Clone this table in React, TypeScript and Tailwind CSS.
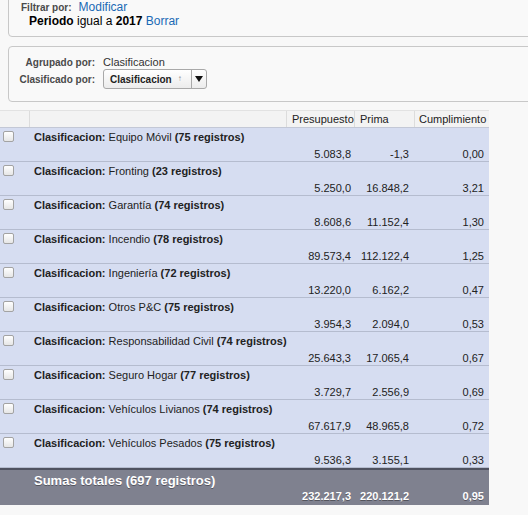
const rows = [
  { name: "Equipo Móvil", count: 75, pres: "5.083,8", prima: "-1,3", cump: "0,00" },
  { name: "Fronting", count: 23, pres: "5.250,0", prima: "16.848,2", cump: "3,21" },
  { name: "Garantía", count: 74, pres: "8.608,6", prima: "11.152,4", cump: "1,30" },
  { name: "Incendio", count: 78, pres: "89.573,4", prima: "112.122,4", cump: "1,25" },
  { name: "Ingeniería", count: 72, pres: "13.220,0", prima: "6.162,2", cump: "0,47" },
  { name: "Otros P&C", count: 75, pres: "3.954,3", prima: "2.094,0", cump: "0,53" },
  { name: "Responsabilidad Civil", count: 74, pres: "25.643,3", prima: "17.065,4", cump: "0,67" },
  { name: "Seguro Hogar", count: 77, pres: "3.729,7", prima: "2.556,9", cump: "0,69" },
  { name: "Vehículos Livianos", count: 74, pres: "67.617,9", prima: "48.965,8", cump: "0,72" },
  { name: "Vehículos Pesados", count: 75, pres: "9.536,3", prima: "3.155,1", cump: "0,33" },
];

const cols = "grid grid-cols-[30px_257px_68px_60px_74px]";

function Checkbox() {
  return (
    <span className="block w-[11px] h-[11px] mt-[3px] ml-[3px] rounded-[2px] border border-[#a3a3a3] bg-gradient-to-b from-white to-[#e6e6e6]" />
  );
}

export default function App() {
  return (
    <div className="w-[528px] h-[515px] overflow-hidden bg-[#f8f8f8] text-[#222] font-['Liberation_Sans',Arial,sans-serif]">
      <div className="ml-[8px] -mt-[10px] w-[540px] h-[47px] border border-[#c8c8c8] rounded-[4px] bg-[#f9f9f9] pt-[10px] pl-[12px]">
        <div className="flex items-baseline gap-[7px] text-[10px] leading-[13px]">
          <span className="font-bold text-[#4a4a4a]">Filtrar por:</span>
          <span className="text-[12px] text-[#1a69b5]">Modificar</span>
        </div>
        <div className="pl-[8px] text-[12px] leading-[14px] text-black">
          <span className="font-bold">Periodo</span> igual a <span className="font-bold">2017</span>{" "}
          <span className="text-[#1a69b5]">Borrar</span>
        </div>
      </div>

      <div className="ml-[8px] mt-[9px] w-[540px] h-[56px] border border-[#c8c8c8] rounded-[4px] bg-[#f9f9f9] pt-[9px] text-[11px] leading-[13px] text-[#4a4a4a]">
        <div className="grid grid-cols-[86px_auto] gap-x-[8px] items-center">
          <span className="font-bold text-right text-[10px]">Agrupado por:</span>
          <span className="text-[#333]">Clasificacion</span>
          <span className="font-bold text-right text-[10px]">Clasificado por:</span>
          <div className="flex w-[104px] h-[20px] border border-[#a9a9a9] rounded-[3px] bg-gradient-to-b from-white to-[#ececec]">
            <div className="flex items-center w-[88px] border-r border-[#a9a9a9] pl-[6px] gap-[6px]">
              <span className="font-bold text-[10px] text-[#222]">Clasificacion</span>
              <span className="text-[8px] leading-[8px] text-[#888]">↑</span>
            </div>
            <div className="flex flex-1 items-center justify-center">
              <svg width="8" height="6" viewBox="0 0 8 6">
                <path d="M0 0 L8 0 L4 6 Z" fill="#111" />
              </svg>
            </div>
          </div>
        </div>
      </div>

      <div className="mt-[8px] w-[489px] text-[11px] leading-[13px]">
        <div className={`${cols} h-[18px] bg-[#f3f3f3] border-t border-[#e2e2e2] border-b border-b-[#c3c8d6] text-[#222]`}>
          <div className="border-r border-[#dcdcdc]" />
          <div className="border-r border-[#dcdcdc]" />
          <div className="border-r border-[#dcdcdc] pl-[5px] pt-[2px]">Presupuesto</div>
          <div className="border-r border-[#dcdcdc] pl-[5px] pt-[2px]">Prima</div>
          <div className="pl-[4px] pt-[2px]">Cumplimiento</div>
        </div>

        {rows.map((r) => (
          <div key={r.name} className={`${cols} h-[34px] bg-[#d6ddf1] border-b border-[#b5bccf]`}>
            <div>
              <Checkbox />
            </div>
            <div className="pl-[4px] pt-[3px] text-[#222]">
              <span className="font-bold">Clasificacion:</span> {r.name}{" "}
              <span className="font-bold">({r.count} registros)</span>
            </div>
            <div className="text-right pr-[4px] pt-[20px]">{r.pres}</div>
            <div className="text-right pr-[6px] pt-[20px]">{r.prima}</div>
            <div className="text-right pr-[5px] pt-[20px]">{r.cump}</div>
          </div>
        ))}

        <div className={`${cols} h-[37px] bg-[#7f818f] border-t-2 border-[#4f5260] text-white font-bold [text-shadow:0_1px_0_rgba(0,0,0,0.35)]`}>
          <div />
          <div className="pl-[4px] pt-[3px] text-[13px] leading-[15px]">Sumas totales (697 registros)</div>
          <div className="text-right pr-[4px] pt-[20px]">232.217,3</div>
          <div className="text-right pr-[6px] pt-[20px]">220.121,2</div>
          <div className="text-right pr-[5px] pt-[20px]">0,95</div>
        </div>
      </div>
    </div>
  );
}
